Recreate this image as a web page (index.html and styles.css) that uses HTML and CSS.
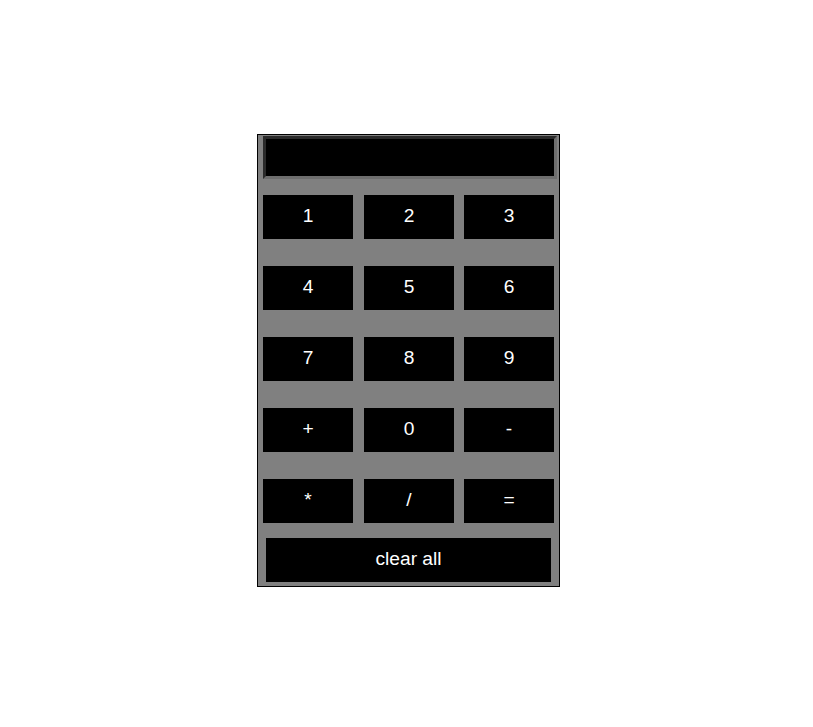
FILE: index.html
```html
<!DOCTYPE html>
<html>
<head>
<meta charset="utf-8">
<link rel="stylesheet" href="styles.css">
</head>
<body>
<div class="calc">
  <div class="display"></div>
  <div class="keys">
    <button class="key">1</button><button class="key">2</button><button class="key">3</button>
    <button class="key">4</button><button class="key">5</button><button class="key">6</button>
    <button class="key">7</button><button class="key">8</button><button class="key">9</button>
    <button class="key">+</button><button class="key">0</button><button class="key">-</button>
    <button class="key">*</button><button class="key">/</button><button class="key">=</button>
  </div>
  <button class="clear">clear all</button>
</div>
</body>
</html>
```
FILE: styles.css
```css
html, body {
  margin: 0;
  padding: 0;
  background: #ffffff;
}
body {
  padding: 134px 0 0 257px;
  font-family: "Liberation Sans", Arial, sans-serif;
}
.calc {
  width: 296px;
  box-sizing: content-box;
  border: 1px solid #000;
  background: #808080;
  padding: 1px 0 4px 5px;
  display: flex;
  flex-direction: column;
  align-items: flex-start;
}
.display {
  width: 294px;
  height: 43px;
  box-sizing: border-box;
  background: #000;
  border-style: solid;
  border-width: 3px;
  border-color: #2a2a2a #6e6e6e #6e6e6e #2a2a2a;
}
.keys {
  margin-top: 16px;
  display: grid;
  grid-template-columns: 101px 100px 90px;
  grid-auto-rows: 44px;
  row-gap: 27px;
}
.key, .clear {
  background: #000;
  color: #fff;
  border: none;
  margin: 0;
  padding: 0 0 2px;
  font-family: "Liberation Sans", Arial, sans-serif;
  font-size: 19.2px;
  cursor: pointer;
}
.key {
  width: 90px;
  height: 44px;
}
.clear {
  margin: 15px 0 0 3px;
  width: 285px;
  height: 44px;
}
```
